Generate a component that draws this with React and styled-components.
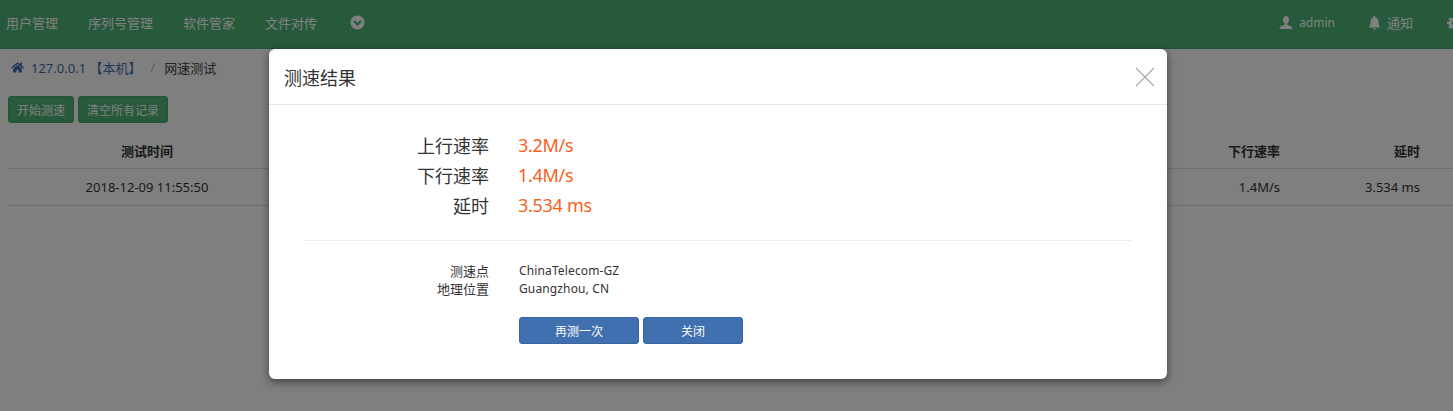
import React from 'react';
import styled, { createGlobalStyle } from 'styled-components';
import { FaHome } from 'react-icons/fa';

const Global = createGlobalStyle`
  html, body { margin: 0; padding: 0; height: 100%; overflow: hidden; background: #fff; }
  body { font-family: "Noto Sans", "Noto Sans CJK SC", sans-serif; font-size: 13px; color: #333; }
  * { box-sizing: border-box; }
`;
const Page = styled.div`width: 1453px; height: 411px; position: relative; overflow: hidden;`;
const Nav = styled.nav`
  height: 49px; padding-bottom: 3px; background: #4eb476; display: flex; align-items: center; color: #fff; font-size: 13px;
  border-bottom: 1px solid #48a56d;
`;
const NavItem = styled.span`margin-left: ${p => p.$ml}px; display: inline-flex; align-items: center; gap: 6px; white-space: nowrap;`;
const NavLatin = styled.span`font-size: 12px;`;
const Crumbs = styled.div`height: 36px; padding-left: 11px; display: flex; align-items: center; color: #444;`;
const CrumbLink = styled.span`color: #3f6fae; margin-left: 7px;`;
const CrumbSep = styled.span`color: #bbb; margin: 0 9px;`;
const Tools = styled.div`padding: 11px 8px 0; display: flex; gap: 4px;`;
const GreenBtn = styled.button`
  height: 27px; padding: 0 8px; background: #4eb476; border: 1px solid #48a56d; border-radius: 3px;
  color: #fff; font: inherit; font-size: 12px;
`;
const Table = styled.div`margin: 10px 0 0 8px;`;
const Row = styled.div`
  display: grid; grid-template-columns: 278px 1fr 140px 140px 33px; height: ${p => p.$h}px; align-items: center;
  border-bottom: 1px solid #ddd; font-weight: ${p => p.$head ? 700 : 400}; color: #333;
`;
const Cell = styled.div`text-align: ${p => p.$align || 'left'};`;
const Overlay = styled.div`position: absolute; inset: 0; background: rgba(0,0,0,.5);`;
const Modal = styled.div`
  position: absolute; left: 269px; top: 49px; width: 898px; height: 330px; background: #fff;
  border-radius: 6px; box-shadow: 0 3px 9px rgba(0,0,0,.5);
`;
const ModalHead = styled.div`
  height: 56px; border-bottom: 1px solid #e5e5e5; padding: 0 12px 0 15px; display: flex; align-items: center; justify-content: space-between;
`;
const Title = styled.div`font-size: 18px; color: #333;`;
const Body = styled.div`padding: 0 35px;`;
const Stats = styled.div`padding: 25px 0 20px; border-bottom: 1px solid #eee;`;
const StatRow = styled.div`display: grid; grid-template-columns: 185px 1fr; column-gap: 29px; height: 30px; align-items: center; font-size: 18px;`;
const Label = styled.div`text-align: right; color: #333;`;
const Value = styled.div`color: #f85f1c; letter-spacing: -0.3px;`;
const Info = styled.div`padding-top: 20px;`;
const InfoRow = styled.div`display: grid; grid-template-columns: 185px 1fr; column-gap: 30px; height: 18px; align-items: center; color: #333;`;
const InfoValue = styled.div`font-size: 12px; letter-spacing: 0.13px;`;
const Actions = styled.div`margin: 20px 0 0 215px; display: flex; gap: 4px;`;
const BlueBtn = styled.button`
  height: 27px; width: ${p => p.$w}px; background: #4170b0; border: 1px solid #3a659f; border-radius: 3px; color: #fff; font: inherit; font-size: 12px;
`;
const Svg = styled.svg`display: block; flex: none;`;
const HomeIcon = styled(FaHome)`display: block; flex: none; color: #3f6fae; width: 13px; height: 13px;`;

const User = () => <Svg width="14" height="13" viewBox="0 0 14 13"><path fill="#fff" d="M7 0C5 0 4 1.500 4 3.500 4 5.300 5 7 5.700 7.600v1.200C4 9.600.5 10 .5 13h13c0-3-3.500-3.400-5.200-4.200V7.600C9 7 10 5.300 10 3.500 10 1.500 9 0 7 0z"/></Svg>;
const Bell = () => <Svg width="13" height="14" viewBox="0 0 12 14"><path fill="#fff" d="M6 0c-.6 0-1 .4-1 1v.6C3 2 2 3.500 2 5.500 2 9 1.500 10 0 11.500h12C10.500 10 10 9 10 5.500 10 3.500 9 2 7 1.600V1c0-.6-.4-1-1-1zM4.500 12.300a1.500 1.500 0 0 0 3 0z"/></Svg>;
const Gear = () => <Svg width="14" height="14" viewBox="0 0 14 14"><path fill="#fff" fillRule="evenodd" d="M6 0h2l.3 2 1.400.6L11.300 1.400l1.400 1.400-1.200 1.600.6 1.400 2 .3v2l-2 .3-.6 1.400 1.200 1.600-1.400 1.400-1.600-1.200-1.400.6-.3 2H6l-.3-2-1.400-.6-1.600 1.200-1.400-1.400 1.200-1.600-.6-1.400-2-.3V6l2-.3.6-1.400L1.300 2.800l1.400-1.400 1.600 1.200 1.400-.6zM7 4.800a2.200 2.200 0 1 0 0 4.400 2.200 2.200 0 0 0 0-4.400z"/></Svg>;
const Chevron = () => <Svg width="15" height="15" viewBox="0 0 15 15"><circle cx="7.500" cy="7.500" r="7" fill="#fff"/><path d="M4 6l3.500 3.500L11 6" fill="none" stroke="#4eb476" strokeWidth="2.200"/></Svg>;
const Close = () => <Svg width="20" height="20" viewBox="0 0 20 20"><path d="M1 1l18 18M19 1L1 19" stroke="#aaa" strokeWidth="1.200" fill="none"/></Svg>;

export default function App() {
  return (
    <Page>
      <Global />
      <Nav>
        <NavItem $ml={6}>用户管理</NavItem>
        <NavItem $ml={30}>序列号管理</NavItem>
        <NavItem $ml={30}>软件管家</NavItem>
        <NavItem $ml={30}>文件对传</NavItem>
        <NavItem $ml={33}><Chevron /></NavItem>
        <NavItem $ml={914}><User /><NavLatin>admin</NavLatin></NavItem>
        <NavItem $ml={33}><Bell />通知</NavItem>
        <NavItem $ml={34}><Gear /></NavItem>
      </Nav>
      <Crumbs><HomeIcon /><CrumbLink>127.0.0.1 【本机】</CrumbLink><CrumbSep>/</CrumbSep>网速测试</Crumbs>
      <Tools><GreenBtn>开始测速</GreenBtn><GreenBtn>清空所有记录</GreenBtn></Tools>
      <Table>
        <Row $head $h={36}><Cell $align="center">测试时间</Cell><Cell /><Cell $align="right">下行速率</Cell><Cell $align="right">延时</Cell><Cell /></Row>
        <Row $h={37}><Cell $align="center">2018-12-09 11:55:50</Cell><Cell /><Cell $align="right">1.4M/s</Cell><Cell $align="right">3.534 ms</Cell><Cell /></Row>
      </Table>
      <Overlay />
      <Modal>
        <ModalHead><Title>测速结果</Title><Close /></ModalHead>
        <Body>
          <Stats>
            <StatRow><Label>上行速率</Label><Value>3.2M/s</Value></StatRow>
            <StatRow><Label>下行速率</Label><Value>1.4M/s</Value></StatRow>
            <StatRow><Label>延时</Label><Value>3.534 ms</Value></StatRow>
          </Stats>
          <Info>
            <InfoRow><Label>测速点</Label><InfoValue>ChinaTelecom-GZ</InfoValue></InfoRow>
            <InfoRow><Label>地理位置</Label><InfoValue>Guangzhou, CN</InfoValue></InfoRow>
          </Info>
          <Actions><BlueBtn $w={120}>再测一次</BlueBtn><BlueBtn $w={100}>关闭</BlueBtn></Actions>
        </Body>
      </Modal>
    </Page>
  );
}
